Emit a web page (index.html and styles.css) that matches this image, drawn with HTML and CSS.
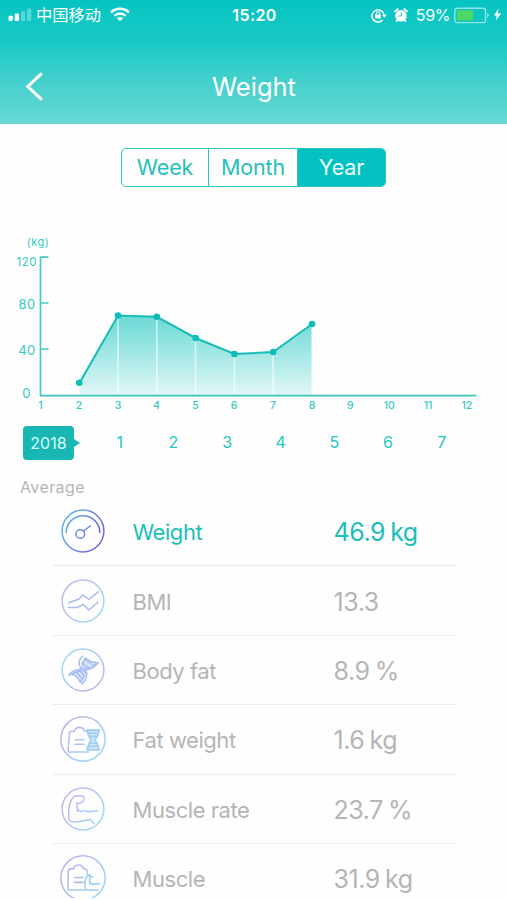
FILE: index.html
```html
<!DOCTYPE html>
<html lang="en">
<head>
<meta charset="utf-8">
<title>Weight</title>
<link rel="stylesheet" href="styles.css">
</head>
<body>
<svg class="defs" width="0" height="0" aria-hidden="true">
  <defs>
    <linearGradient id="cool" gradientUnits="userSpaceOnUse" x1="0" y1="12" x2="44" y2="32"><stop offset="0" stop-color="#55b8ea"/><stop offset="1" stop-color="#7c5ad8"/></linearGradient>
    <linearGradient id="violet" gradientUnits="userSpaceOnUse" x1="4" y1="10" x2="40" y2="36"><stop offset="0" stop-color="#c4b0f0"/><stop offset="1" stop-color="#98dcf5"/></linearGradient>
    <linearGradient id="sky" gradientUnits="userSpaceOnUse" x1="4" y1="10" x2="40" y2="36"><stop offset="0" stop-color="#98dcf5"/><stop offset="1" stop-color="#c0b0f2"/></linearGradient>
  </defs>
</svg>
<div class="screen">
  <header class="header">
    <div class="status">
      <div class="status-left">
        <svg class="signal" width="24" height="14" viewBox="0 0 24 14" fill="#fff"><rect x="0.5" y="7.8" width="4.3" height="5.2" rx="1.2"/><rect x="6.7" y="5.6" width="4.3" height="7.4" rx="1.2"/><rect x="12.9" y="3.2" width="4.3" height="9.8" rx="1.2" opacity=".3"/><rect x="19" y="0.5" width="4.3" height="12.5" rx="1.2" opacity=".3"/></svg>
        <span class="carrier">中国移动</span>
        <svg class="wifi" width="20" height="15" viewBox="0 0 20 15" fill="none" stroke="#fff" stroke-width="2.6"><path d="M1 5.5a12.7 12.7 0 0 1 18 0"/><path d="M4.4 8.9a7.9 7.9 0 0 1 11.2 0"/><path d="M10 14.3 7 11.2a4.2 4.2 0 0 1 6 0z" fill="#fff" stroke="none"/></svg>
      </div>
      <span class="clock">15:20</span>
      <div class="status-right">
        <svg class="lock" width="16" height="15" viewBox="0 0 16 15" fill="none" stroke="#fff"><path d="M11.6 12.1A6.1 6.1 0 1 1 13.1 7" stroke-width="1.5"/><path d="M11 6.7h4.6l-2.3 3z" fill="#fff" stroke="none"/><rect x="4.2" y="6.6" width="5.6" height="4" rx=".6" fill="#fff" stroke="none"/><path d="M5.3 6.8V5.4a1.7 1.7 0 0 1 3.4 0v1.4" stroke-width="1.1"/></svg>
        <svg class="alarm" width="14" height="15" viewBox="0 0 14 15" fill="none" stroke="#fff" stroke-linecap="round"><circle cx="7" cy="7.8" r="5.8" fill="#fff" stroke="none"/><path d="M1 3.4 3.6 1.2M13 3.4 10.4 1.2" stroke-width="1.8"/><path d="m3.3 12.2-.9 1M10.7 12.2l.9 1" stroke-width="1.7"/><path d="M7.3 4.9V8H5" stroke="#13c5c2" stroke-width="1"/></svg>
        <span class="percent">59%</span>
        <svg class="battery" width="37" height="17" viewBox="0 0 37 17"><rect x=".9" y="1.2" width="30.6" height="14.4" rx="2.2" fill="none" stroke="#8fe3e1" stroke-width="1.4"/><rect x="3" y="3.3" width="16.2" height="10.2" rx=".6" fill="#4bd964"/><path d="M33.2 5.7a3 3 0 0 1 0 5.3z" fill="#8fe3e1"/></svg>
        <svg class="bolt" width="8" height="13" viewBox="0 0 8 13"><path d="M5 .5.5 7.4h2.7L2.4 12.5 7.5 5.4H4.4z" fill="#fff"/></svg>
      </div>
    </div>
    <div class="navbar">
      <svg class="back" width="18" height="29" viewBox="0 0 18 29" fill="none" stroke="#fff" stroke-width="3" stroke-linecap="round"><path d="M15.9 2.2 2.8 14.500 15.900 26.800"/></svg>
      <h1 class="title">Weight</h1>
    </div>
  </header>

  <nav class="tabs">
    <span class="tab tab-week">Week</span>
    <span class="tab tab-month">Month</span>
    <span class="tab tab-year">Year</span>
  </nav>

  <svg class="chart" width="507" height="190" viewBox="0 230 507 190">
    <defs><linearGradient id="area" gradientUnits="userSpaceOnUse" x1="0" y1="315" x2="0" y2="395"><stop offset="0" stop-color="#69d9d5"/><stop offset="1" stop-color="#e0f7f6"/></linearGradient></defs>
    <path d="M79.5 383 118 315.5l38.8 1.3 38.8 21.2 38.8 16 38.8-2L312 324V395H79.5z" fill="url(#area)"/>
    <path d="M118 316v79M156.8 317v78M195.6 338v57M234.4 354v41M273.2 352v43M312 324v71" stroke="#fff" stroke-opacity=".6" stroke-width="1.6"/>
    <path d="M48.5 257.2h-8V395.7M40.5 303h8M40.5 349h8" fill="none" stroke="#45cbc6" stroke-width="1.7"/>
    <path d="M39.7 395.7H476.5" stroke="#3cc5c0" stroke-width="1.8"/>
    <path d="M79.5 383 118 315.5l38.8 1.3 38.8 21.2 38.8 16 38.8-2L312 324" fill="none" stroke="#17bdb7" stroke-width="2"/>
    <g fill="#0dbdb8"><circle cx="79.2" cy="382.7" r="3.3"/><circle cx="118" cy="315.6" r="3.3"/><circle cx="156.8" cy="316.8" r="3.3"/><circle cx="195.6" cy="338" r="3.3"/><circle cx="234.4" cy="354" r="3.3"/><circle cx="273.2" cy="352" r="3.3"/><circle cx="312" cy="324" r="3.3"/></g>
    <g class="y-labels"><text class="unit" x="38" y="246">(kg)</text><text x="26.8" y="266" class="y-top">120</text><text x="27" y="309">80</text><text x="27" y="355">40</text><text x="26.5" y="398">0</text></g>
    <g class="x-labels"><text x="40.5" y="409">1</text><text x="79" y="409">2</text><text x="118" y="409">3</text><text x="156.500" y="409">4</text><text x="195.500" y="409">5</text><text x="234" y="409">6</text><text x="273" y="409">7</text><text x="312" y="409">8</text><text x="350.300" y="409">9</text><text x="389.300" y="409">10</text><text x="428" y="409">11</text><text x="466.800" y="409">12</text></g>
  </svg>

  <div class="periods">
    <span class="year">2018</span>
    <div class="months"><span>1</span><span>2</span><span>3</span><span>4</span><span>5</span><span>6</span><span>7</span></div>
  </div>

  <h2 class="caption">Average</h2>

  <ul class="metrics">
    <li class="metric active">
      <svg class="icon" viewBox="0 0 44 44" stroke="url(#cool)"><circle cx="22" cy="22" r="20.9"/><path d="M5.2 23.5a16.8 16.8 0 1 1 33.6 0"/><circle cx="19.3" cy="25" r="4.3"/><path d="m22.5 22 6.8-5"/></svg>
      <span class="name">Weight</span><span class="value">46.9 kg</span>
    </li>
    <li class="metric">
      <svg class="icon" viewBox="0 0 44 44" stroke="url(#violet)"><circle cx="22" cy="22" r="20.9"/><g stroke="#a6bdec"><path d="m7.5 24 10.5-4 4-4 6 4.5 9.5-7.8"/><path d="M7.5 28.5h9l5.5-3.2 6 5.7 9-7.7"/></g></svg>
      <span class="name">BMI</span><span class="value">13.3</span>
    </li>
    <li class="metric">
      <svg class="icon" viewBox="0 0 44 44" stroke="url(#sky)"><circle cx="22" cy="22" r="20.9"/><g stroke="#a3bdf0"><path d="M21.5 8c-4 4.5-4.5 8.500-1.500 11.500s9.500 4 17.300-4.700"/><path d="M24.500 10c4 4 7 4.500 11.500 4.500l-5.500 5.500c-4 1.500-9-.5-9.500-4.500z" fill="#dce8fc"/><path d="m23.500 11.500 9 6M21.500 15l6.500 4.500"/><path d="M7.800 27.700c4.200-6.500 11-7.200 14.700-4.700s4.500 7-1.500 13"/><path d="M10 26.500c5 0 7 3.500 9.500 8l3-4.500c1-3.500-1-6.500-4.500-7z" fill="#dce8fc"/><path d="m15.500 24 5.500 7M19 22.500l4.500 5.500"/><path d="M19 20.500c3 0 6 2 7 5.500"/></g></svg>
      <span class="name">Body fat</span><span class="value">8.9 %</span>
    </li>
    <li class="metric">
      <svg class="icon icon-large" viewBox="0 0 44 44" stroke="url(#violet)"><circle cx="22" cy="22" r="21.200"/><path d="M27 34.500H9.200c-1 0-1.500-.8-1.400-1.700L9 16.500c.1-1.500 1-2 2.300-2h2.500c1.200-4.800 8.200-4.800 9.500 0H26"/><path d="M14.500 22.700h8.500M14.500 27h8.500"/><g stroke="#9dccf3"><path d="M26 13.500h11.500c-.5 5-2 7-4 9.500 2.500 3 3.500 5.500 4 9.500H26c.3-4 1.500-6.500 4-9.500-2.500-2.500-3.500-5-4-9.500z" fill="#c9e5fb"/><path d="M27 16.500h9M28.500 19.500h6M29 26h5M28 29h7.500"/></g></svg>
      <span class="name">Fat weight</span><span class="value">1.6 kg</span>
    </li>
    <li class="metric">
      <svg class="icon" viewBox="0 0 44 44" stroke="url(#violet)"><circle cx="22" cy="22" r="20.900"/><path d="M16.300 24.300c.5-3.600-.8-6.300-.3-8.500 1.600 1 4.500.2 6.200-1.800 1.300-1.800 1.200-4.200-.5-4.800-2.200-.7-5.500-.7-8.700.3C8.500 13.500 7.300 23 7.800 31.500c.2 2 1.700 3 4 3.300 5.500.8 12.500-1.300 17.700-2.400l3.300 4M16.300 24.300c1.400-1 2.800-.8 3.700.3l3.500-1 4 1.200 9-1"/></svg>
      <span class="name">Muscle rate</span><span class="value">23.7 %</span>
    </li>
    <li class="metric">
      <svg class="icon icon-large" viewBox="0 0 44 44" stroke="url(#violet)"><circle cx="22" cy="22" r="21.200"/><path d="M24 33.500H7.800V16.200c0-2 1-2.900 3-2.900h2c1.200-5 8.200-5 9.700 0 2.200-.4 3.500.7 3.500 2.500v2.500"/><path d="M14 21.500h8M14 26.200h8" stroke="#a6bdec"/><path d="M31 20.500c-1.500 1.500-4-.2-1.800-1.500-3.500-.3-5.500 4-5.500 8.500 0 5 1 6.500 4.500 6.200 3-.3 5-.2 8-.2M28.500 22.500c-.3 2-.3 3.500.2 5 1-.5 1.500-.3 2 .5l6.800-.6" stroke="#9dccf3"/></svg>
      <span class="name">Muscle</span><span class="value">31.9 kg</span>
    </li>
  </ul>
</div>
</body>
</html>
```
FILE: styles.css
```css
* { box-sizing: border-box; }
body {
  margin: 0;
  background: #fefefe;
  font-family: Inter, "Noto Sans CJK SC", sans-serif;
}
.defs { display: block; }
.screen {
  display: flex;
  flex-direction: column;
  width: 507px;
  height: 898px;
  overflow: hidden;
}
.header {
  flex: none;
  height: 124px;
  background: linear-gradient(#05c4c2, #1ac9c6 35%, #44d0cd 65%, #68d8d4);
  color: #fff;
}
.status {
  display: grid;
  grid-template-columns: 1fr auto 1fr;
  align-items: center;
  height: 30px;
  padding: 0 6px 0 8px;
}
.status-left, .status-right { display: flex; align-items: center; }
.status-right { justify-content: flex-end; }
.carrier {
  margin-left: 4px;
  font-family: "Noto Sans CJK SC", sans-serif;
  font-size: 16.3px;
  line-height: 18px;
  margin-top: -2px;
}
.wifi { margin-left: 9px; margin-top: -1px; }
.clock { font-size: 16px; font-weight: 600; letter-spacing: 0.4px; }
.alarm { margin-left: 7px; }
.percent { margin-left: 8px; font-size: 16px; letter-spacing: -0.4px; }
.battery { margin-left: 4px; }
.bolt { width: 9px; margin: -2px -1px 0 2px; }
.navbar {
  display: grid;
  grid-template-columns: 60px 1fr 60px;
  align-items: center;
  height: 112px;
}
.back { margin-left: 25px; }
.title {
  margin: 0 0 0 1px;
  font-size: 25.5px;
  font-weight: 400;
  text-align: center;
}
.tabs {
  display: grid;
  flex: none;
  grid-template-columns: 86px 89px 1fr;
  width: 265px;
  height: 39px;
  margin: 24px 0 0 121px;
  overflow: hidden;
  border: 1px solid #2ec4c1;
  border-radius: 5px;
  color: #26bfbc;
  font-size: 21.5px;
  line-height: 37px;
  letter-spacing: -0.15px;
  text-align: center;
}
.tab-month, .tab-year { border-left: 1px solid #2ec4c1; }
.tab-year { background: #03c1c0; color: #eafffd; }
.chart { display: block; flex: none; margin-top: 43px; }
.y-labels, .x-labels { fill: #36c9c3; text-anchor: middle; }
.y-labels { font-size: 13px; letter-spacing: 0.5px; }
.y-labels .y-top { font-size: 11.5px; }
.y-labels .unit { font-size: 11px; }
.x-labels { font-size: 10.5px; font-weight: 500; }
.periods {
  display: flex;
  flex: none;
  align-items: center;
  height: 34px;
  margin: 6px 0 0 23px;
}
.year {
  position: relative;
  width: 51px;
  height: 34px;
  border-radius: 4px;
  background: #19b7b3;
  color: #d9fffc;
  font-size: 16px;
  line-height: 34px;
  text-align: center;
}
.year::after {
  content: "";
  position: absolute;
  top: 13px;
  right: -6px;
  border: solid transparent;
  border-width: 4px 0 4px 6px;
  border-left-color: #19b7b3;
}
.months {
  display: grid;
  grid-template-columns: repeat(7, 53.65px);
  margin: -3px 0 0 19px;
  color: #25c5c1;
  font-size: 16px;
  text-align: center;
}
.caption {
  flex: none;
  margin: 17px 0 0 20px;
  color: #b5b5b5;
  font-size: 16px;
  font-weight: 400;
  line-height: 20px;
  letter-spacing: 0.4px;
}
.metrics {
  flex: none;
  width: 405px;
  margin: 0 0 0 52px;
  padding: 0;
  list-style: none;
}
.metric {
  display: grid;
  grid-template-columns: 81px 200.5px 1fr;
  align-items: center;
  height: 69.4px;
  border-bottom: 1.5px solid #ececec;
  color: #b5b5b5;
}
.active { color: #1bbfb9; }
.icon {
  width: 44px;
  height: 44px;
  margin-left: 9px;
  fill: none;
  stroke-width: 1.5;
  stroke-linecap: round;
  stroke-linejoin: round;
}
.icon-large { width: 46px; height: 46px; margin-left: 7.5px; }
.name, .value { padding-top: 2px; }
.name { margin-left: -0.5px; font-size: 22px; letter-spacing: -0.45px; }
.value { font-size: 25px; letter-spacing: -0.45px; word-spacing: -1.5px; }
```
